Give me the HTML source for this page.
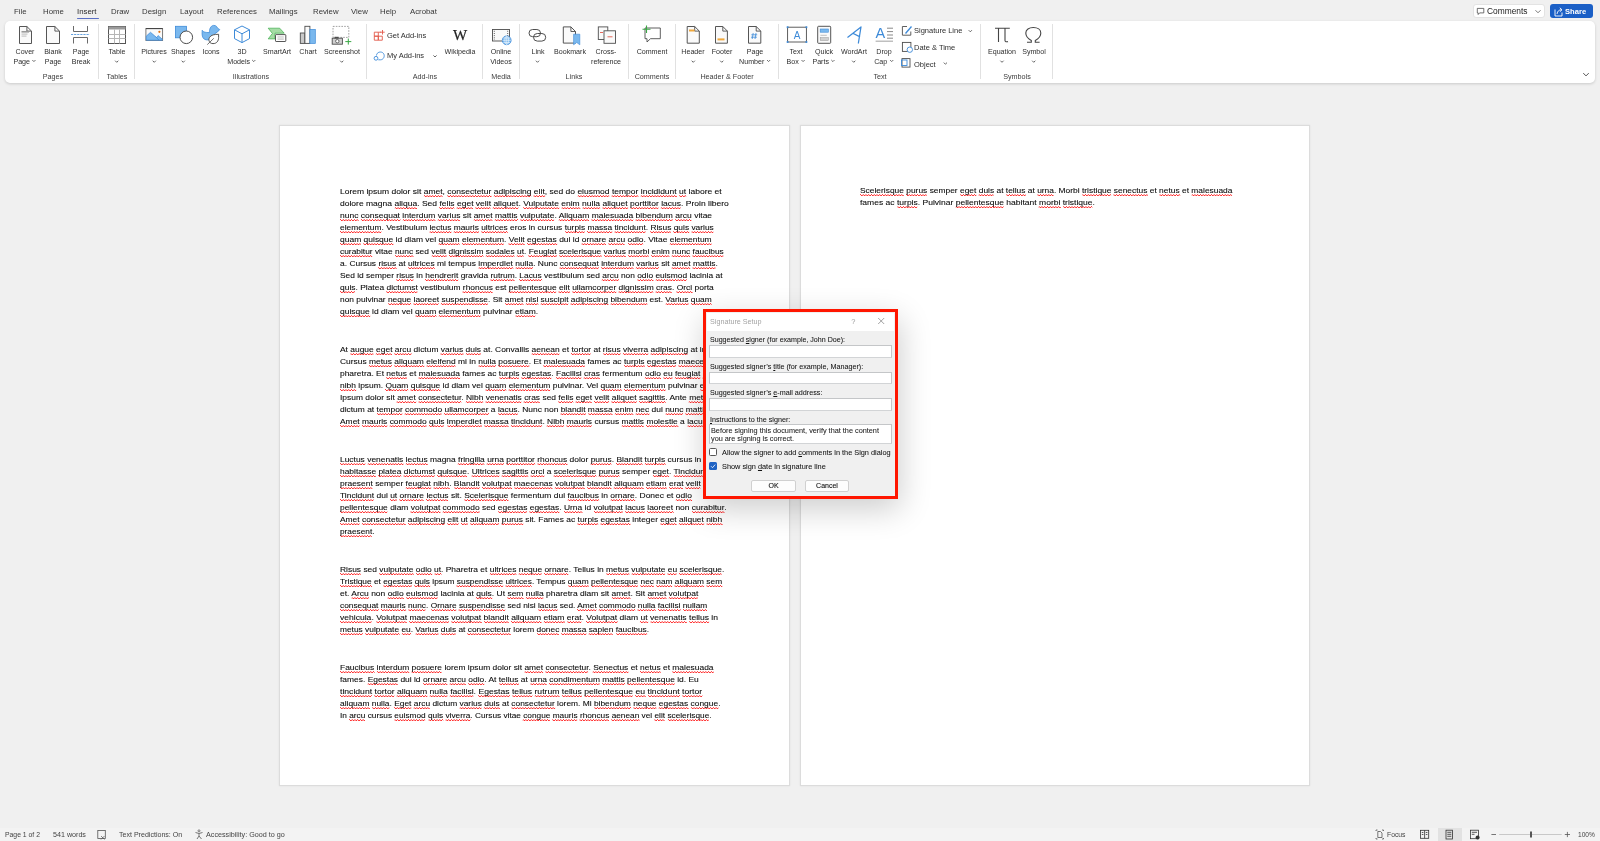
<!DOCTYPE html>
<html><head><meta charset="utf-8">
<style>
*{box-sizing:border-box}
html,body{margin:0;padding:0}
body{-webkit-font-smoothing:antialiased;width:1600px;height:841px;background:#f0f0f0;position:relative;overflow:hidden;font-family:"Liberation Sans",sans-serif;color:#424242}
.a{position:absolute}
.tab,.lbl,.glbl,.sb,.dl,.btn{will-change:transform}
.tab{position:absolute;top:7.2px;font-size:7.8px;line-height:10px;color:#383838;white-space:nowrap}
#ribbon{position:absolute;left:5px;top:21px;width:1590px;height:62px;background:#fff;border-radius:5px;box-shadow:0 1px 3px rgba(0,0,0,.16)}
.lbl{position:absolute;font-size:7.1px;line-height:10px;color:#2e2e2e;white-space:nowrap;text-align:center;transform:translateX(-50%)}
.glbl{position:absolute;top:71.8px;font-size:7.2px;line-height:10px;color:#3c3c3c;white-space:nowrap;transform:translateX(-50%)}
.sep{position:absolute;top:24px;width:1px;height:55px;background:#e1e1e1}
.cv{display:inline-block;width:2.1px;height:2.1px;border-right:0.8px solid #555;border-bottom:0.8px solid #555;transform:rotate(45deg);margin-left:2.6px;position:relative;top:-2.2px}
.dl u{text-decoration:underline;text-decoration-thickness:0.6px;text-underline-offset:1px}
.page{position:absolute;top:125px;width:511px;height:661px;background:#fff;border:1px solid #dcdcdc;box-shadow:0 0 2px rgba(0,0,0,.07)}
.ln{will-change:transform;position:absolute;font-size:7.3px;line-height:10px;color:#0a0a0a;-webkit-text-stroke:0.08px #0a0a0a;white-space:nowrap;transform-origin:0 0}
.ln u{text-decoration:none;background-image:linear-gradient(90deg,#f33 50%,transparent 50%),linear-gradient(90deg,transparent 50%,#f33 50%);background-repeat:repeat-x;background-size:2.4px 0.9px,2.4px 0.9px;background-position:0 calc(100% - 0.9px),0 100%;padding-bottom:1px}
.sb{position:absolute;top:830px;font-size:7px;line-height:10px;color:#444;white-space:nowrap}
#dlg{position:absolute;left:703px;top:309.2px;width:195.2px;height:190.1px;border:3.8px solid #ff1600;background:#f0f0f0;box-shadow:2px 10px 30px rgba(0,0,0,.2)}
.dl{position:absolute;font-size:6.4px;line-height:8px;color:#111;-webkit-text-stroke:0.05px #111;white-space:nowrap}
.tb{position:absolute;background:#fff;border:1px solid #c4c6c8;border-bottom-color:#d2d4d6}
.btn{position:absolute;background:#fdfdfd;border:1px solid #d0d0d0;border-radius:2px;font-size:7px;line-height:10px;text-align:center;color:#111;-webkit-text-stroke:0.1px #111}
</style></head><body>
<!-- tabs -->
<div class="tab" style="left:13.5px">File</div>
<div class="tab" style="left:42.5px">Home</div>
<div class="tab" style="left:77px;color:#2b2b2b">Insert</div>
<div class="a" style="left:77.3px;top:17.5px;width:21.7px;height:1.3px;background:#5a6fc4;border-radius:1px"></div>
<div class="tab" style="left:110.5px">Draw</div>
<div class="tab" style="left:141.8px">Design</div>
<div class="tab" style="left:180px">Layout</div>
<div class="tab" style="left:216.8px">References</div>
<div class="tab" style="left:269.3px">Mailings</div>
<div class="tab" style="left:313.3px">Review</div>
<div class="tab" style="left:350.5px">View</div>
<div class="tab" style="left:380px">Help</div>
<div class="tab" style="left:410px">Acrobat</div>

<!-- comments / share -->
<div class="a" style="left:1472.5px;top:4.4px;width:72px;height:13.7px;background:#fff;border:1px solid #e3e3e3;border-radius:3px"></div>
<div class="tab" style="left:1486.8px;top:6.4px;color:#222;font-size:8.4px">Comments</div>
<div class="a" style="left:1550px;top:3.8px;width:42.5px;height:14.7px;background:#1a5fc6;border-radius:3px"></div>
<div class="tab" style="left:1564.8px;top:7.4px;color:#fff;font-weight:bold;font-size:7.6px">Share</div>

<div id="ribbon"></div>
<div class="lbl" style="left:25px;top:47.1px">Cover</div>
<div class="lbl" style="left:25px;top:56.7px">Page<svg width="5" height="4" style="margin-left:1.6px;vertical-align:1px"><polyline points="0.9,1 2.5,2.6 4.1,1" fill="none" stroke="#555" stroke-width="0.85"/></svg></div>
<div class="lbl" style="left:52.5px;top:47.1px">Blank</div>
<div class="lbl" style="left:52.5px;top:56.7px">Page</div>
<div class="lbl" style="left:80.5px;top:47.1px">Page</div>
<div class="lbl" style="left:80.5px;top:56.7px">Break</div>
<div class="lbl" style="left:116.75px;top:47.1px">Table</div>
<div class="lbl" style="left:154.25px;top:47.1px">Pictures</div>
<div class="lbl" style="left:183.25px;top:47.1px">Shapes</div>
<div class="lbl" style="left:211.25px;top:47.1px">Icons</div>
<div class="lbl" style="left:242px;top:47.1px">3D</div>
<div class="lbl" style="left:242px;top:56.7px">Models<svg width="5" height="4" style="margin-left:1.6px;vertical-align:1px"><polyline points="0.9,1 2.5,2.6 4.1,1" fill="none" stroke="#555" stroke-width="0.85"/></svg></div>
<div class="lbl" style="left:277px;top:47.1px">SmartArt</div>
<div class="lbl" style="left:307.5px;top:47.1px">Chart</div>
<div class="lbl" style="left:341.75px;top:47.1px">Screenshot</div>
<div class="lbl" style="left:460px;top:47.1px">Wikipedia</div>
<div class="lbl" style="left:500.75px;top:47.1px">Online</div>
<div class="lbl" style="left:500.75px;top:56.7px">Videos</div>
<div class="lbl" style="left:537.5px;top:47.1px">Link</div>
<div class="lbl" style="left:570px;top:47.1px">Bookmark</div>
<div class="lbl" style="left:606.25px;top:47.1px">Cross-</div>
<div class="lbl" style="left:606.25px;top:56.7px">reference</div>
<div class="lbl" style="left:651.75px;top:47.1px">Comment</div>
<div class="lbl" style="left:693.25px;top:47.1px">Header</div>
<div class="lbl" style="left:721.75px;top:47.1px">Footer</div>
<div class="lbl" style="left:755px;top:47.1px">Page</div>
<div class="lbl" style="left:755px;top:56.7px">Number<svg width="5" height="4" style="margin-left:1.6px;vertical-align:1px"><polyline points="0.9,1 2.5,2.6 4.1,1" fill="none" stroke="#555" stroke-width="0.85"/></svg></div>
<div class="lbl" style="left:796.25px;top:47.1px">Text</div>
<div class="lbl" style="left:796.25px;top:56.7px">Box<svg width="5" height="4" style="margin-left:1.6px;vertical-align:1px"><polyline points="0.9,1 2.5,2.6 4.1,1" fill="none" stroke="#555" stroke-width="0.85"/></svg></div>
<div class="lbl" style="left:823.75px;top:47.1px">Quick</div>
<div class="lbl" style="left:823.75px;top:56.7px">Parts<svg width="5" height="4" style="margin-left:1.6px;vertical-align:1px"><polyline points="0.9,1 2.5,2.6 4.1,1" fill="none" stroke="#555" stroke-width="0.85"/></svg></div>
<div class="lbl" style="left:853.75px;top:47.1px">WordArt</div>
<div class="lbl" style="left:884.25px;top:47.1px">Drop</div>
<div class="lbl" style="left:884.25px;top:56.7px">Cap<svg width="5" height="4" style="margin-left:1.6px;vertical-align:1px"><polyline points="0.9,1 2.5,2.6 4.1,1" fill="none" stroke="#555" stroke-width="0.85"/></svg></div>
<div class="lbl" style="left:1002px;top:47.1px">Equation</div>
<div class="lbl" style="left:1033.75px;top:47.1px">Symbol</div>
<div class="sep" style="left:97.9px"></div>
<div class="sep" style="left:133.8px"></div>
<div class="sep" style="left:365.75px"></div>
<div class="sep" style="left:482.0px"></div>
<div class="sep" style="left:518.75px"></div>
<div class="sep" style="left:628.25px"></div>
<div class="sep" style="left:675.0px"></div>
<div class="sep" style="left:778.25px"></div>
<div class="sep" style="left:980.0px"></div>
<div class="sep" style="left:1052.0px"></div>
<div class="glbl" style="left:52.5px">Pages</div>
<div class="glbl" style="left:116.75px">Tables</div>
<div class="glbl" style="left:250.75px">Illustrations</div>
<div class="glbl" style="left:424.5px">Add-ins</div>
<div class="glbl" style="left:501.25px">Media</div>
<div class="glbl" style="left:573.75px">Links</div>
<div class="glbl" style="left:651.75px">Comments</div>
<div class="glbl" style="left:726.75px">Header &amp; Footer</div>
<div class="glbl" style="left:879.5px">Text</div>
<div class="glbl" style="left:1016.75px">Symbols</div>
<div class="lbl" style="left:387px;top:31.45px;transform:none;font-size:7.5px">Get Add-ins</div>
<div class="lbl" style="left:387px;top:51.45px;transform:none;font-size:7.5px">My Add-ins</div>
<div class="lbl" style="left:913.75px;top:26.45px;transform:none;font-size:7.5px">Signature Line</div>
<div class="lbl" style="left:913.75px;top:42.7px;transform:none;font-size:7.5px">Date &amp; Time</div>
<div class="lbl" style="left:913.75px;top:59.60000000000001px;transform:none;font-size:7.5px">Object</div>
<svg class="a" style="left:0;top:0" width="1600" height="90"><path d="M19.5,26.5 H26.9 L31.5,31.1 V43.5 H19.5 Z" fill="#fafafa" stroke="#4d4d4d" stroke-width="0.95" stroke-linejoin="miter"/><path d="M26.9,26.5 V31.1 H31.5" fill="none" stroke="#4d4d4d" stroke-width="0.9"/><rect x="21.5" y="31" width="7.5" height="1.6" fill="#9a9a9a"/><rect x="21.5" y="33.5" width="6" height="1.2" fill="#c5c5c5"/><rect x="21.5" y="35.5" width="5" height="1.2" fill="#c5c5c5"/><path d="M46.5,26.5 H54.9 L59.5,31.1 V43.5 H46.5 Z" fill="#fafafa" stroke="#4d4d4d" stroke-width="0.95" stroke-linejoin="miter"/><path d="M54.9,26.5 V31.1 H59.5" fill="none" stroke="#4d4d4d" stroke-width="0.9"/><path d="M73.5,26 V31.5 H87.5 V26" fill="none" stroke="#6a6a6a" stroke-width="1"/><path d="M73.5,43.5 V37.5 H87.5 V43.5" fill="none" stroke="#6a6a6a" stroke-width="1"/><line x1="71" y1="34.5" x2="89.7" y2="34.5" stroke="#3d8ad8" stroke-width="0.8" stroke-dasharray="2.2 0.9"/><rect x="108.5" y="26.5" width="17" height="17" fill="#fff" stroke="#555" stroke-width="1"/><rect x="108.5" y="26.5" width="17" height="3" fill="#9a9a9a"/><path d="M108.5,34.5 H125.5 M108.5,38.5 H125.5 M114.5,29.5 V43.5 M119.5,29.5 V43.5" stroke="#b5b5b5" stroke-width="1"/><rect x="145.9" y="28.6" width="16.7" height="11.9" fill="#fafafa" stroke="#6a6a6a" stroke-width="0.9"/><path d="M145.9,28.6 H162.6" stroke="#3a3a3a" stroke-width="0.9"/><path d="M146.3,36.1 L150.5,32.3 L156.6,37.6 L158.1,35.6 L162.3,39.2 V40.2 H146.3 Z" fill="#7ab8ee" stroke="#3d8ad8" stroke-width="0.7" stroke-linejoin="round"/><path d="M155.5,36.6 L159,40.2" stroke="#3d8ad8" stroke-width="0.7"/><circle cx="159.4" cy="31.8" r="1.1" fill="#e0700f"/><rect x="175.5" y="26.3" width="11" height="11.5" fill="#7ab8ee" stroke="#3d8ad8" stroke-width="0.8"/><circle cx="186.3" cy="37.3" r="6.3" fill="#fff" stroke="#4d4d4d" stroke-width="1"/><path d="M202.2,30.3 C203.2,32 205,32.5 209.5,32.6 C209.2,30 210.3,25.6 213.6,25.4 C216,25.3 217.2,26.8 217.5,28.2 L219.7,29.5 C218.6,31.2 217,32.6 215,33.5 L212.5,39.2 C210.5,39.9 208,40 206,39.8 C203.4,39.4 202.1,37 202.1,34 Z" fill="#7ab8ee" stroke="#3d8ad8" stroke-width="0.8"/><path d="M218.6,34.3 C214.5,34.3 211,34.8 209.4,37.6 C208.2,40 209.3,43.6 213,43.6 C216.6,43.7 218.6,41 218.6,37.5 Z" fill="#fff" stroke="#4d4d4d" stroke-width="0.95"/><path d="M207.3,44.6 L213.8,38.3" stroke="#4d4d4d" stroke-width="0.8"/><path d="M242,26 L249.5,29.8 V38.6 L242,42.6 L234.5,38.6 V29.8 Z M234.5,29.8 L242,33.8 L249.5,29.8 M242,33.8 V42.6" fill="#fff" stroke="#3d8ad8" stroke-width="1"/><path d="M268.2,28.2 H279.7 L284.2,33.2 H275 V38.9 H268.2 L272.4,33.4 Z" fill="#a5dca5" stroke="#3fae4e" stroke-width="0.7" stroke-linejoin="round"/><rect x="275.5" y="34.6" width="10.3" height="6.9" rx="0.6" fill="#fff" stroke="#4d4d4d" stroke-width="0.95"/><path d="M277.5,36.8 H283.8 M277.5,38.1 H283.8 M277.5,39.4 H283.8" stroke="#bdbdbd" stroke-width="0.7"/><rect x="300.3" y="33" width="4.6" height="10.4" fill="#c9c9c9" stroke="#4d4d4d" stroke-width="0.9"/><rect x="304.9" y="26.3" width="5" height="17.1" fill="#fafafa" stroke="#4d4d4d" stroke-width="0.9"/><rect x="309.9" y="29.5" width="5.4" height="13.9" fill="#7ab8ee" stroke="#3d8ad8" stroke-width="0.7"/><rect x="333" y="26.4" width="15.8" height="11" fill="none" stroke="#8a8a8a" stroke-width="0.8" stroke-dasharray="1.6 1.2"/><rect x="332.2" y="38.2" width="10.2" height="6" fill="#d0d0d0" stroke="#4d4d4d" stroke-width="0.9"/><rect x="334.5" y="36.8" width="4" height="1.6" fill="#4d4d4d"/><circle cx="337.3" cy="41.2" r="1.7" fill="#fff" stroke="#4d4d4d" stroke-width="0.8"/><path d="M348.3,38.5 V44.6 M345.3,41.6 H351.3" stroke="#3aa845" stroke-width="1"/><path d="M374.3,32.2 H378.3 V36.2 H374.3 Z M374.3,36.2 H378.3 V40.2 H374.3 Z M378.3,36.2 H382.3 V40.2 H378.3 Z M378.3,32.2 H381" fill="none" stroke="#e2584a" stroke-width="0.9"/><path d="M382.5,30 V34.5 M380.3,32.2 H384.7" stroke="#e2584a" stroke-width="0.9"/><circle cx="376" cy="58.3" r="1.9" fill="none" stroke="#3d8ad8" stroke-width="0.9"/><path d="M376.5,55.5 C376.5,52 381.5,50.8 383.5,53.5 C385.3,56 383.5,59.8 380.5,59.8 H378.3" fill="none" stroke="#3d8ad8" stroke-width="0.9"/><polyline points="433.40,55.40 435.00,57.00 436.60,55.40" fill="none" stroke="#555" stroke-width="0.9"/><text x="460" y="40" font-family="Liberation Serif" font-size="15" text-anchor="middle" fill="#222" stroke="#222" stroke-width="0.25">W</text><rect x="492.5" y="29.5" width="17" height="11.5" fill="#fafafa" stroke="#4d4d4d" stroke-width="0.9"/><path d="M494.3,30.8 V40 M507.7,30.8 V40" stroke="#4d4d4d" stroke-width="1" stroke-dasharray="0.9 1.3"/><circle cx="506.7" cy="40.3" r="4.4" fill="#7ab8ee" stroke="#3d8ad8" stroke-width="0.8"/><path d="M502.5,40.3 H510.9 M506.7,36 V44.6 M503.3,38 H510.1 M503.3,42.6 H510.1" stroke="#fff" stroke-width="0.55"/><ellipse cx="506.7" cy="40.3" rx="1.9" ry="4.2" fill="none" stroke="#fff" stroke-width="0.55"/><rect x="529" y="29.5" width="11.5" height="7.2" rx="3.6" fill="none" stroke="#4d4d4d" stroke-width="1"/><rect x="533.5" y="33.5" width="12.2" height="7.6" rx="3.8" fill="none" stroke="#4d4d4d" stroke-width="1"/><path d="M563.3,26.9 H570.9 L575.5,31.5 V43.1 H563.3 Z" fill="#fafafa" stroke="#4d4d4d" stroke-width="0.95" stroke-linejoin="miter"/><path d="M570.9,26.9 V31.5 H575.5" fill="none" stroke="#4d4d4d" stroke-width="0.9"/><path d="M573.6,34.2 H579.8 V44.8 L576.7,42.5 L573.6,44.8 Z" fill="#7ab8ee" stroke="#3d8ad8" stroke-width="0.6"/><rect x="598.3" y="26.9" width="9.5" height="12.6" fill="#fafafa" stroke="#4d4d4d" stroke-width="0.9"/><rect x="604" y="30.8" width="11.5" height="12.5" fill="#fafafa" stroke="#4d4d4d" stroke-width="0.9"/><path d="M600,32.5 H603 M607.5,36.8 H612.5" stroke="#e2584a" stroke-width="0.9"/><path d="M645,28 H660.3 V38.7 H650.5 L647,42 V38.7 H645 Z" fill="#fff" stroke="#4d4d4d" stroke-width="0.9"/><path d="M646.5,25.5 V33 M642.5,29.3 H650.5" stroke="#3aa845" stroke-width="1.1"/><path d="M687.2,26.5 H694.6999999999999 L699.3,31.1 V43.2 H687.2 Z" fill="#fafafa" stroke="#4d4d4d" stroke-width="0.95" stroke-linejoin="miter"/><path d="M694.6999999999999,26.5 V31.1 H699.3" fill="none" stroke="#4d4d4d" stroke-width="0.9"/><rect x="689" y="29.5" width="5.5" height="2" fill="#f0a83c"/><path d="M715.5,26.5 H722.8 L727.4,31.1 V43.2 H715.5 Z" fill="#fafafa" stroke="#4d4d4d" stroke-width="0.95" stroke-linejoin="miter"/><path d="M722.8,26.5 V31.1 H727.4" fill="none" stroke="#4d4d4d" stroke-width="0.9"/><rect x="717.5" y="38.4" width="7" height="2" fill="#f0a83c"/><path d="M748.5,26.5 H756.1999999999999 L760.8,31.1 V43.2 H748.5 Z" fill="#fafafa" stroke="#4d4d4d" stroke-width="0.95" stroke-linejoin="miter"/><path d="M756.1999999999999,26.5 V31.1 H760.8" fill="none" stroke="#4d4d4d" stroke-width="0.9"/><path d="M753.2,33 L752.2,39 M756,33 L755,39 M751.3,34.8 H757.2 M751,37.2 H756.9" stroke="#3d8ad8" stroke-width="0.8"/><rect x="787.6" y="27.2" width="18.8" height="14.8" fill="#fff" stroke="#4d4d4d" stroke-width="0.9"/><text x="797" y="38.7" font-family="Liberation Sans" font-size="10" text-anchor="middle" fill="#3d8ad8">A</text><rect x="786.7" y="26.3" width="1.8" height="1.8" fill="#3d8ad8"/><rect x="805.5" y="26.3" width="1.8" height="1.8" fill="#3d8ad8"/><rect x="786.7" y="41.1" width="1.8" height="1.8" fill="#3d8ad8"/><rect x="805.5" y="41.1" width="1.8" height="1.8" fill="#3d8ad8"/><rect x="817.7" y="26.3" width="13" height="17" rx="0.8" fill="#fafafa" stroke="#4d4d4d" stroke-width="0.95"/><rect x="820.2" y="29" width="8.1" height="3.2" fill="#7ab8ee" stroke="#3d8ad8" stroke-width="0.6"/><path d="M820.4,35.3 H826.8" stroke="#9a9a9a" stroke-width="0.6"/><rect x="820.2" y="37.6" width="8.1" height="3" fill="#d0d0d0" stroke="#9a9a9a" stroke-width="0.5"/><path d="M847.8,37.2 L861,26.9 L858.4,43 M852.8,33.3 L859.6,36.6" fill="none" stroke="#3d8ad8" stroke-width="1.25" stroke-linecap="round" stroke-linejoin="round"/><text x="880.3" y="38.2" font-family="Liberation Sans" font-size="14.5" text-anchor="middle" fill="#3d8ad8">A</text><path d="M887,28.2 H893 M887,31.6 H893 M887,35 H893 M887,38.2 H893" stroke="#6a6a6a" stroke-width="0.8"/><rect x="875.6" y="40.6" width="17.4" height="1.2" fill="#b0b0b0"/><path d="M902.4,26.5 H907 M910.8,31.5 V35.2 H902.4 V26.5" fill="none" stroke="#4d4d4d" stroke-width="0.9"/><path d="M905.5,33.5 L911.5,26.5" stroke="#3d8ad8" stroke-width="1.3"/><polyline points="968.70,30.20 970.30,31.80 971.90,30.20" fill="none" stroke="#555" stroke-width="0.9"/><rect x="902.4" y="42.4" width="8.5" height="9" fill="#fff" stroke="#4d4d4d" stroke-width="0.9"/><circle cx="909.8" cy="49.7" r="2.7" fill="#fff" stroke="#3d8ad8" stroke-width="0.9"/><rect x="902" y="58.6" width="8" height="8.5" fill="#fff" stroke="#4d4d4d" stroke-width="0.9"/><rect x="901.5" y="60" width="5.5" height="5.5" fill="none" stroke="#3d8ad8" stroke-width="0.9"/><polyline points="943.80,62.60 945.40,64.20 947.00,62.60" fill="none" stroke="#555" stroke-width="0.9"/><path d="M995,28.3 H1009.8 M998.5,28.3 V42 M1005,28.3 V40.5 C1005,41.8 1006.5,42 1008,41.6" fill="none" stroke="#444" stroke-width="1.1"/><path d="M1027,42.2 H1031.3 V40.5 C1027.5,38.5 1025.8,35.5 1025.8,33 C1025.8,29.6 1029,27.5 1033.3,27.5 C1037.6,27.5 1040.8,29.6 1040.8,33 C1040.8,35.5 1039.1,38.5 1035.3,40.5 V42.2 H1039.6" fill="none" stroke="#444" stroke-width="1.1"/><polyline points="115.15,60.70 116.75,62.30 118.35,60.70" fill="none" stroke="#555" stroke-width="0.9"/><polyline points="152.65,60.70 154.25,62.30 155.85,60.70" fill="none" stroke="#555" stroke-width="0.9"/><polyline points="181.65,60.70 183.25,62.30 184.85,60.70" fill="none" stroke="#555" stroke-width="0.9"/><polyline points="340.15,60.70 341.75,62.30 343.35,60.70" fill="none" stroke="#555" stroke-width="0.9"/><polyline points="535.90,60.70 537.50,62.30 539.10,60.70" fill="none" stroke="#555" stroke-width="0.9"/><polyline points="691.65,60.70 693.25,62.30 694.85,60.70" fill="none" stroke="#555" stroke-width="0.9"/><polyline points="720.15,60.70 721.75,62.30 723.35,60.70" fill="none" stroke="#555" stroke-width="0.9"/><polyline points="852.15,60.70 853.75,62.30 855.35,60.70" fill="none" stroke="#555" stroke-width="0.9"/><polyline points="1000.40,60.70 1002.00,62.30 1003.60,60.70" fill="none" stroke="#555" stroke-width="0.9"/><polyline points="1032.15,60.70 1033.75,62.30 1035.35,60.70" fill="none" stroke="#555" stroke-width="0.9"/><polyline points="1583.25,73.10 1586.00,75.90 1588.75,73.10" fill="none" stroke="#444" stroke-width="0.9"/><path d="M1477.3,8.4 H1483.8 V12.9 H1479.6 L1478.2,14.5 V12.9 H1477.3 Z" fill="none" stroke="#444" stroke-width="0.75"/><polyline points="1535.50,10.25 1538.00,12.75 1540.50,10.25" fill="none" stroke="#666" stroke-width="0.9"/><path d="M1555,9.5 V16 H1562 V12.5" fill="none" stroke="#fff" stroke-width="0.9"/><path d="M1557,14 C1557.5,11 1559,9.8 1561.5,9.8 M1559.8,7.8 L1562,9.8 L1559.8,11.8" fill="none" stroke="#fff" stroke-width="0.9"/></svg>

<div class="page" style="left:279px"></div>
<div class="page" style="left:800px;width:510px"></div>
<div class="ln" style="left:339.5px;top:186.90px;transform:scaleX(1.1656)">Lorem ipsum dolor sit <u>amet</u>, <u>consectetur</u> <u>adipiscing</u> <u>elit</u>, sed do <u>eiusmod</u> <u>tempor</u> <u>incididunt</u> <u>ut</u> labore et</div>
<div class="ln" style="left:339.5px;top:198.95px;transform:scaleX(1.1665)">dolore magna <u>aliqua</u>. Sed <u>felis</u> <u>eget</u> <u>velit</u> <u>aliquet</u>. <u>Vulputate</u> <u>enim</u> <u>nulla</u> <u>aliquet</u> <u>porttitor</u> <u>lacus</u>. Proin libero</div>
<div class="ln" style="left:339.5px;top:211.00px;transform:scaleX(1.1637)"><u>nunc</u> <u>consequat</u> <u>interdum</u> <u>varius</u> sit <u>amet</u> <u>mattis</u> <u>vulputate</u>. <u>Aliquam</u> <u>malesuada</u> <u>bibendum</u> <u>arcu</u> vitae</div>
<div class="ln" style="left:339.5px;top:223.05px;transform:scaleX(1.1488)"><u>elementum</u>. Vestibulum <u>lectus</u> <u>mauris</u> <u>ultrices</u> eros in cursus <u>turpis</u> <u>massa</u> <u>tincidunt</u>. <u>Risus</u> <u>quis</u> <u>varius</u></div>
<div class="ln" style="left:339.5px;top:235.10px;transform:scaleX(1.1614)"><u>quam</u> <u>quisque</u> id diam vel <u>quam</u> <u>elementum</u>. <u>Velit</u> <u>egestas</u> dui id <u>ornare</u> <u>arcu</u> <u>odio</u>. Vitae <u>elementum</u></div>
<div class="ln" style="left:339.5px;top:247.15px;transform:scaleX(1.1479)"><u>curabitur</u> vitae <u>nunc</u> sed <u>velit</u> <u>dignissim</u> <u>sodales</u> <u>ut</u>. <u>Feugiat</u> <u>scelerisque</u> <u>varius</u> <u>morbi</u> <u>enim</u> <u>nunc</u> <u>faucibus</u></div>
<div class="ln" style="left:339.5px;top:259.20px;transform:scaleX(1.1556)">a. Cursus <u>risus</u> at <u>ultrices</u> mi tempus <u>imperdiet</u> <u>nulla</u>. Nunc <u>consequat</u> <u>interdum</u> <u>varius</u> sit <u>amet</u> <u>mattis</u>.</div>
<div class="ln" style="left:339.5px;top:271.25px;transform:scaleX(1.1482)">Sed id semper <u>risus</u> in <u>hendrerit</u> gravida <u>rutrum</u>. <u>Lacus</u> vestibulum sed <u>arcu</u> non <u>odio</u> <u>euismod</u> lacinia at</div>
<div class="ln" style="left:339.5px;top:283.30px;transform:scaleX(1.1559)"><u>quis</u>. Platea <u>dictumst</u> vestibulum <u>rhoncus</u> est <u>pellentesque</u> <u>elit</u> <u>ullamcorper</u> <u>dignissim</u> <u>cras</u>. <u>Orci</u> porta</div>
<div class="ln" style="left:339.5px;top:295.35px;transform:scaleX(1.1469)">non pulvinar <u>neque</u> <u>laoreet</u> <u>suspendisse</u>. Sit <u>amet</u> <u>nisl</u> <u>suscipit</u> <u>adipiscing</u> <u>bibendum</u> est. <u>Varius</u> <u>quam</u></div>
<div class="ln" style="left:339.5px;top:307.40px;transform:scaleX(1.1624)"><u>quisque</u> id diam vel <u>quam</u> <u>elementum</u> pulvinar <u>etiam</u>.</div>
<div class="ln" style="left:339.5px;top:344.80px;transform:scaleX(1.1548)">At <u>augue</u> <u>eget</u> <u>arcu</u> dictum <u>varius</u> <u>duis</u> at. Convallis <u>aenean</u> et <u>tortor</u> at <u>risus</u> <u>viverra</u> <u>adipiscing</u> at in</div>
<div class="ln" style="left:339.5px;top:356.85px;transform:scaleX(1.1548)">Cursus <u>metus</u> <u>aliquam</u> <u>eleifend</u> mi in <u>nulla</u> <u>posuere</u>. Et <u>malesuada</u> fames ac <u>turpis</u> <u>egestas</u> <u>maecenas</u></div>
<div class="ln" style="left:339.5px;top:368.90px;transform:scaleX(1.1548)">pharetra. Et <u>netus</u> et <u>malesuada</u> fames ac <u>turpis</u> <u>egestas</u>. <u>Facilisi</u> <u>cras</u> fermentum <u>odio</u> <u>eu</u> <u>feugiat</u> <u>pretium</u></div>
<div class="ln" style="left:339.5px;top:380.95px;transform:scaleX(1.1548)"><u>nibh</u> ipsum. <u>Quam</u> <u>quisque</u> id diam vel <u>quam</u> <u>elementum</u> pulvinar. Vel <u>quam</u> <u>elementum</u> pulvinar <u>etiam</u></div>
<div class="ln" style="left:339.5px;top:393.00px;transform:scaleX(1.1548)">Ipsum dolor sit <u>amet</u> <u>consectetur</u>. <u>Nibh</u> <u>venenatis</u> <u>cras</u> sed <u>felis</u> <u>eget</u> <u>velit</u> <u>aliquet</u> <u>sagittis</u>. Ante <u>metus</u></div>
<div class="ln" style="left:339.5px;top:405.05px;transform:scaleX(1.1548)">dictum at <u>tempor</u> <u>commodo</u> <u>ullamcorper</u> a <u>lacus</u>. Nunc non <u>blandit</u> <u>massa</u> <u>enim</u> <u>nec</u> dui <u>nunc</u> <u>mattis</u></div>
<div class="ln" style="left:339.5px;top:417.10px;transform:scaleX(1.1548)"><u>Amet</u> <u>mauris</u> <u>commodo</u> <u>quis</u> <u>imperdiet</u> <u>massa</u> <u>tincidunt</u>. <u>Nibh</u> <u>mauris</u> cursus <u>mattis</u> <u>molestie</u> a <u>iaculis</u>.</div>
<div class="ln" style="left:339.5px;top:454.60px;transform:scaleX(1.1548)"><u>Luctus</u> <u>venenatis</u> <u>lectus</u> magna <u>fringilla</u> <u>urna</u> <u>porttitor</u> <u>rhoncus</u> dolor <u>purus</u>. <u>Blandit</u> <u>turpis</u> cursus in <u>hac</u></div>
<div class="ln" style="left:339.5px;top:466.65px;transform:scaleX(1.1548)"><u>habitasse</u> <u>platea</u> <u>dictumst</u> <u>quisque</u>. <u>Ultrices</u> <u>sagittis</u> <u>orci</u> a <u>scelerisque</u> <u>purus</u> semper <u>eget</u>. <u>Tincidunt</u></div>
<div class="ln" style="left:339.5px;top:478.70px;transform:scaleX(1.1548)"><u>praesent</u> semper <u>feugiat</u> <u>nibh</u>. <u>Blandit</u> <u>volutpat</u> <u>maecenas</u> <u>volutpat</u> <u>blandit</u> <u>aliquam</u> <u>etiam</u> <u>erat</u> <u>velit</u></div>
<div class="ln" style="left:339.5px;top:490.75px;transform:scaleX(1.1620)"><u>Tincidunt</u> dui <u>ut</u> <u>ornare</u> <u>lectus</u> sit. <u>Scelerisque</u> fermentum dui <u>faucibus</u> in <u>ornare</u>. Donec et <u>odio</u></div>
<div class="ln" style="left:339.5px;top:502.80px;transform:scaleX(1.1545)"><u>pellentesque</u> diam <u>volutpat</u> <u>commodo</u> sed <u>egestas</u> <u>egestas</u>. <u>Urna</u> id <u>volutpat</u> <u>lacus</u> <u>laoreet</u> non <u>curabitur</u>.</div>
<div class="ln" style="left:339.5px;top:514.85px;transform:scaleX(1.1526)"><u>Amet</u> <u>consectetur</u> <u>adipiscing</u> <u>elit</u> <u>ut</u> <u>aliquam</u> <u>purus</u> sit. Fames ac <u>turpis</u> <u>egestas</u> integer <u>eget</u> <u>aliquet</u> <u>nibh</u></div>
<div class="ln" style="left:339.5px;top:526.90px;transform:scaleX(1.1333)"><u>praesent</u>.</div>
<div class="ln" style="left:339.5px;top:564.60px;transform:scaleX(1.1529)"><u>Risus</u> sed <u>vulputate</u> <u>odio</u> <u>ut</u>. Pharetra et <u>ultrices</u> <u>neque</u> <u>ornare</u>. Tellus in <u>metus</u> <u>vulputate</u> <u>eu</u> <u>scelerisque</u>.</div>
<div class="ln" style="left:339.5px;top:576.65px;transform:scaleX(1.1414)"><u>Tristique</u> et <u>egestas</u> <u>quis</u> ipsum <u>suspendisse</u> <u>ultrices</u>. Tempus <u>quam</u> <u>pellentesque</u> <u>nec</u> <u>nam</u> <u>aliquam</u> <u>sem</u></div>
<div class="ln" style="left:339.5px;top:588.70px;transform:scaleX(1.1619)">et. <u>Arcu</u> non <u>odio</u> <u>euismod</u> lacinia at <u>quis</u>. Ut <u>sem</u> <u>nulla</u> pharetra diam sit <u>amet</u>. Sit <u>amet</u> <u>volutpat</u></div>
<div class="ln" style="left:339.5px;top:600.75px;transform:scaleX(1.1398)"><u>consequat</u> <u>mauris</u> <u>nunc</u>. <u>Ornare</u> <u>suspendisse</u> sed nisi <u>lacus</u> sed. <u>Amet</u> <u>commodo</u> <u>nulla</u> <u>facilisi</u> <u>nullam</u></div>
<div class="ln" style="left:339.5px;top:612.80px;transform:scaleX(1.1717)"><u>vehicula</u>. <u>Volutpat</u> <u>maecenas</u> <u>volutpat</u> <u>blandit</u> <u>aliquam</u> <u>etiam</u> <u>erat</u>. <u>Volutpat</u> diam <u>ut</u> <u>venenatis</u> <u>tellus</u> in</div>
<div class="ln" style="left:339.5px;top:624.85px;transform:scaleX(1.1460)"><u>metus</u> <u>vulputate</u> <u>eu</u>. <u>Varius</u> <u>duis</u> at <u>consectetur</u> lorem <u>donec</u> <u>massa</u> <u>sapien</u> <u>faucibus</u>.</div>
<div class="ln" style="left:339.5px;top:662.60px;transform:scaleX(1.1538)"><u>Faucibus</u> <u>interdum</u> <u>posuere</u> lorem ipsum dolor sit <u>amet</u> <u>consectetur</u>. <u>Senectus</u> et <u>netus</u> et <u>malesuada</u></div>
<div class="ln" style="left:339.5px;top:674.65px;transform:scaleX(1.1543)">fames. <u>Egestas</u> dui id <u>ornare</u> <u>arcu</u> <u>odio</u>. At <u>tellus</u> at <u>urna</u> <u>condimentum</u> <u>mattis</u> <u>pellentesque</u> id. Eu</div>
<div class="ln" style="left:339.5px;top:686.70px;transform:scaleX(1.1804)"><u>tincidunt</u> <u>tortor</u> <u>aliquam</u> <u>nulla</u> <u>facilisi</u>. <u>Egestas</u> <u>tellus</u> <u>rutrum</u> <u>tellus</u> <u>pellentesque</u> <u>eu</u> <u>tincidunt</u> <u>tortor</u></div>
<div class="ln" style="left:339.5px;top:698.75px;transform:scaleX(1.1505)"><u>aliquam</u> <u>nulla</u>. <u>Eget</u> <u>arcu</u> dictum <u>varius</u> <u>duis</u> at <u>consectetur</u> lorem. Mi <u>bibendum</u> <u>neque</u> <u>egestas</u> <u>congue</u>.</div>
<div class="ln" style="left:339.5px;top:710.80px;transform:scaleX(1.1348)">In <u>arcu</u> cursus <u>euismod</u> <u>quis</u> <u>viverra</u>. Cursus vitae <u>congue</u> <u>mauris</u> <u>rhoncus</u> <u>aenean</u> vel <u>elit</u> <u>scelerisque</u>.</div>
<div class="ln" style="left:860px;top:186.25px;transform:scaleX(1.1518)"><u>Scelerisque</u> <u>purus</u> semper <u>eget</u> <u>duis</u> at <u>tellus</u> at <u>urna</u>. Morbi <u>tristique</u> <u>senectus</u> et <u>netus</u> et <u>malesuada</u></div>
<div class="ln" style="left:860px;top:198.30px;transform:scaleX(1.1676)">fames ac <u>turpis</u>. Pulvinar <u>pellentesque</u> habitant <u>morbi</u> <u>tristique</u>.</div>
<div id="dlg"></div>
<div class="a" style="left:706.8px;top:313px;width:187.6px;height:18px;background:#fff"></div>
<div class="dl" style="left:710px;top:317.5px;color:#a3a3a3;-webkit-text-stroke:0;font-size:7.2px">Signature Setup</div>
<svg class="a" style="left:700px;top:300px" width="200" height="210"><text x="153.4" y="24.2" font-family="Liberation Sans" font-size="7.5" text-anchor="middle" fill="#9a9a9a">?</text><path d="M178.2,18 L184.2,24 M184.2,18 L178.2,24" stroke="#8a8a8a" stroke-width="0.8"/></svg>
<div class="dl" style="left:709.8px;top:336.30px;font-size:7.09px">Suggested <u>s</u>igner (for example, John Doe):</div>
<div class="dl" style="left:709.8px;top:362.60px;font-size:7.2px">Suggested signer&#8217;s <u>t</u>itle (for example, Manager):</div>
<div class="dl" style="left:709.8px;top:389.20px;font-size:7.2px">Suggested signer&#8217;s <u>e</u>-mail address:</div>
<div class="dl" style="left:709.8px;top:415.60px;font-size:7.2px"><u>I</u>nstructions to the signer:</div>
<div class="tb" style="left:708.5px;top:345px;width:183.5px;height:12.5px"></div>
<div class="tb" style="left:708.5px;top:371.5px;width:183.5px;height:12.0px"></div>
<div class="tb" style="left:708.5px;top:398px;width:183.5px;height:12.5px"></div>
<div class="tb" style="left:708.5px;top:424px;width:183.5px;height:19.5px"></div>
<div class="dl" style="left:711px;top:426.5px;font-size:7.3px;line-height:8px;color:#1a1a1a">Before signing this document, verify that the content<br>you are signing is correct.</div>
<div class="a" style="left:709px;top:448.4px;width:8px;height:8px;border:1px solid #555;border-radius:1.5px;background:#fff"></div>
<div class="dl" style="left:721.5px;top:449px;font-size:7.35px">Allow the signer to add <u>c</u>omments in the Sign dialog</div>
<div class="a" style="left:709px;top:462.3px;width:8px;height:8px;border-radius:1.5px;background:#1f63c4"></div>
<svg class="a" style="left:709px;top:462.3px" width="8" height="8"><polyline points="2,4.2 3.5,5.7 6.2,2.6" fill="none" stroke="#fff" stroke-width="0.8"/></svg>
<div class="dl" style="left:721.5px;top:463px;font-size:7.35px">Show sign <u>d</u>ate in signature line</div>
<div class="btn" style="left:751.4px;top:479.5px;width:45.2px;height:12px">OK</div>
<div class="btn" style="left:804.5px;top:479.5px;width:44px;height:12px">Cancel</div>
<div class="a" style="left:0;top:827.5px;width:1600px;height:14px;background:#f3f3f3"></div>
<div class="sb" style="left:5px;font-size:6.84px">Page 1 of 2</div>
<div class="sb" style="left:52.5px;font-size:7.15px">541 words</div>
<div class="sb" style="left:118.75px;font-size:7.07px">Text Predictions: On</div>
<div class="sb" style="left:206.25px;font-size:7.19px">Accessibility: Good to go</div>
<div class="sb" style="left:1386.7px;font-size:6.8px">Focus</div>
<div class="sb" style="left:1578px;font-size:6.6px">100%</div>
<div class="a" style="left:1437.5px;top:828.3px;width:24.7px;height:12.7px;background:#e2e2e2"></div>
<svg class="a" style="left:0;top:0" width="1600" height="841"><rect x="97.8" y="830.5" width="7.5" height="8" fill="none" stroke="#555" stroke-width="0.8"/><path d="M101,836 L104.5,839.5 M104.5,836 L101,839.5" stroke="#555" stroke-width="0.7"/><circle cx="199" cy="830.8" r="1" fill="none" stroke="#555" stroke-width="0.7"/><path d="M195.5,832.5 L199,833.5 L202.5,832.5 M199,833.5 V836 L197,839 M199,836 L201.5,839" fill="none" stroke="#555" stroke-width="0.8"/><path d="M1376,831 V830 H1377.5 M1382,830 H1383.5 V831 M1383.5,838 V839 H1382 M1377.5,839 H1376 V838" fill="none" stroke="#555" stroke-width="0.8"/><path d="M1377.8,831.5 H1380.5 L1382,833 V837.5 H1377.8 Z" fill="none" stroke="#555" stroke-width="0.8"/><rect x="1420.5" y="830.3" width="8.2" height="8" fill="none" stroke="#333" stroke-width="0.8"/><path d="M1424.6,830.3 V838.3 M1421.8,832.5 H1423.4 M1421.8,834.5 H1423.4 M1425.8,832.5 H1427.4 M1425.8,834.5 H1427.4" stroke="#333" stroke-width="0.8"/><rect x="1446" y="830.2" width="6.6" height="8.8" fill="none" stroke="#333" stroke-width="0.8"/><path d="M1447.3,832.3 H1451.3 M1447.3,834.3 H1451.3 M1447.3,836.3 H1451.3" stroke="#333" stroke-width="0.8"/><rect x="1470.5" y="830.2" width="8" height="8.5" fill="none" stroke="#333" stroke-width="0.8"/><path d="M1471.8,832.3 H1477 M1471.8,834.3 H1474.5" stroke="#333" stroke-width="0.8"/><circle cx="1477.6" cy="837.6" r="2" fill="#333"/><path d="M1491.4,834.5 H1496" stroke="#555" stroke-width="0.8"/><path d="M1499.2,834.5 H1561.7" stroke="#bdbdbd" stroke-width="0.8"/><rect x="1530" y="831.5" width="2" height="6" fill="#555"/><path d="M1564.8,834.5 H1570 M1567.4,831.9 V837.1" stroke="#555" stroke-width="0.8"/></svg>
</body></html>
